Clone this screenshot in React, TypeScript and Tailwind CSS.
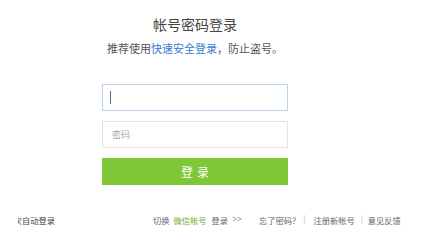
import React from "react";

const cjk = "font-['Microsoft_YaHei','Noto_Sans_CJK_SC',sans-serif]";

export default function App() {
  return (
    <div className={`w-[422px] h-[240px] bg-white flex flex-col overflow-hidden ${cjk}`}>
      {/* Login form */}
      <div className="ml-[102px] w-[186px] flex flex-col items-center pt-[15px]">
        <h1 className="h-[18px] leading-[18px] text-[14px] text-[#444] font-normal">帐号密码登录</h1>
        <p className="mt-[8px] h-[14px] leading-[14px] text-[11px] text-[#555] whitespace-nowrap">
          推荐使用<span className="text-[#3a7bd0]">快速安全登录</span>，防止盗号。
        </p>

        <div className="mt-[29px] w-full h-[27px] border border-[#b9d3ee] bg-white flex items-center pl-[7px]">
          <span className="w-px h-[13px] bg-[#666]" />
        </div>

        <div className="mt-[10px] w-full h-[27px] border border-[#e1e1e1] bg-white flex items-center pl-[9px]">
          <span className="text-[9px] leading-none text-[#aaa]">密码</span>
        </div>

        <button
          type="button"
          className="mt-[10px] w-full h-[27px] bg-[#80c737] text-white text-[12px] leading-none flex items-center justify-center gap-[4px]"
        >
          <span>登</span>
          <span>录</span>
        </button>
      </div>

      {/* Bottom links */}
      <div className="mt-[29px] h-[12px] flex items-center text-[8.25px] leading-[12px] text-[#666] whitespace-nowrap">
        <div className="ml-[18px] w-[40px] overflow-hidden">
          <span className="block ml-[-12.5px] text-[#444]">下次自动登录</span>
        </div>

        <div className="ml-[95px] w-[106px] flex items-center">
          <span>切换</span>
          <span className="ml-[4px] text-[#66b42a]">微信帐号</span>
          <span className="ml-[5px]">登录</span>
          <span className="ml-[4px] font-['Liberation_Sans',sans-serif] text-[#999]">&gt;&gt;</span>
        </div>

        <div className="flex items-center">
          <span>忘了密码？</span>
          <span className="ml-[3px] text-[#ccc] font-['Liberation_Sans',sans-serif]">|</span>
          <span className="ml-[8px]">注册新帐号</span>
          <span className="ml-[6px] text-[#ccc] font-['Liberation_Sans',sans-serif]">|</span>
          <span className="ml-[5px]">意见反馈</span>
        </div>
      </div>
    </div>
  );
}
